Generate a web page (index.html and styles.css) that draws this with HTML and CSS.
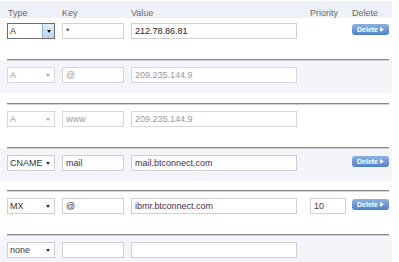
FILE: index.html
```html
<!DOCTYPE html>
<html>
<head>
<meta charset="utf-8">
<link rel="stylesheet" href="styles.css">
</head>
<body>
<div class="dns">
  <div class="head">
    <span class="c-sel">Type</span>
    <span class="c-key">Key</span>
    <span class="c-val">Value</span>
    <span class="c-pri">Priority</span>
    <span class="c-del">Delete</span>
  </div>

  <div class="band first">
    <span class="c-sel sel focus"><span class="sel-t">A</span><span class="arr"><i class="tri"></i></span></span>
    <span class="c-key fld dark">*</span>
    <span class="c-val fld dark">212.78.86.81</span>
    <span class="c-pri"></span>
    <span class="c-del btn">Delete<svg class="bt" width="4" height="5" viewBox="0 0 4 5"><path d="M0 0L4 2.5L0 5Z" fill="#fff"/></svg></span>
  </div>

  <div class="rule"></div>
  <div class="band alt disabled">
    <span class="c-sel sel"><span class="sel-t">A</span><span class="arr"><i class="tri"></i></span></span>
    <span class="c-key fld">@</span>
    <span class="c-val fld">209.235.144.9</span>
  </div>
  <div class="gap"></div>

  <div class="rule"></div>
  <div class="band disabled">
    <span class="c-sel sel"><span class="sel-t">A</span><span class="arr"><i class="tri"></i></span></span>
    <span class="c-key fld">www</span>
    <span class="c-val fld">209.235.144.9</span>
  </div>
  <div class="gap"></div>

  <div class="rule"></div>
  <div class="band alt">
    <span class="c-sel sel"><span class="sel-t">CNAME</span><span class="arr"><i class="tri"></i></span></span>
    <span class="c-key fld">mail</span>
    <span class="c-val fld">mail.btconnect.com</span>
    <span class="c-pri"></span>
    <span class="c-del btn">Delete<svg class="bt" width="4" height="5" viewBox="0 0 4 5"><path d="M0 0L4 2.5L0 5Z" fill="#fff"/></svg></span>
  </div>
  <div class="gap short"></div>

  <div class="rule"></div>
  <div class="band">
    <span class="c-sel sel"><span class="sel-t">MX</span><span class="arr"><i class="tri"></i></span></span>
    <span class="c-key fld">@</span>
    <span class="c-val fld">ibmr.btconnect.com</span>
    <span class="c-pri fld">10</span>
    <span class="c-del btn">Delete<svg class="bt" width="4" height="5" viewBox="0 0 4 5"><path d="M0 0L4 2.5L0 5Z" fill="#fff"/></svg></span>
  </div>
  <div class="gap"></div>

  <div class="rule"></div>
  <div class="band alt last">
    <span class="c-sel sel"><span class="sel-t">none</span><span class="arr"><i class="tri"></i></span></span>
    <span class="c-key fld"></span>
    <span class="c-val fld"></span>
  </div>
</div>
</body>
</html>
```

FILE: styles.css
```css
html, body {
  margin: 0;
  padding: 0;
  background: #fff;
}
body {
  font-family: "Liberation Sans", Arial, sans-serif;
  font-size: 9px;
  color: #333;
}
.dns {
  width: 392px;
  padding-top: 1px;
}
.head {
  display: flex;
  align-items: flex-start;
  height: 10px;
  line-height: 10px;
  padding: 7px 0 0 7px;
  background: #eef1f8;
  color: #6a6a6a;
  font-size: 9px;
}
.head .c-sel { padding-left: 1px; }

.c-sel { width: 48px; flex: none; box-sizing: border-box; }
.c-key { width: 62px; margin-left: 7px; flex: none; box-sizing: border-box; }
.c-val { width: 166px; margin-left: 7px; flex: none; box-sizing: border-box; }
.c-pri { width: 36px; margin-left: 13px; flex: none; box-sizing: border-box; }
.c-del { width: 37px; margin-left: 6px; flex: none; box-sizing: border-box; }

.band {
  display: flex;
  align-items: flex-start;
  box-sizing: border-box;
  height: 32px;
  padding: 6px 0 0 7px;
}
.band.first {
  height: 41px;
  padding-top: 5px;
}
.band.alt { background: #f3f5fa; }
.band.last { height: 28px; }
.gap { height: 10px; }
.gap.short { height: 9px; }

.rule {
  margin: 0 3px 0 7px;
  height: 1px;
  background: #858585;
  border-bottom: 1px solid #d2d2d2;
}

.fld {
  height: 16px;
  border: 1px solid #cfcfcf;
  background: #fff;
  padding-left: 3px;
  line-height: 14px;
  font-size: 9px;
  color: #4d2a4b;
  white-space: nowrap;
  overflow: hidden;
}
.fld.dark { color: #222; }

.sel {
  height: 16px;
  border: 1px solid #cfcfcf;
  background: #fff;
  display: flex;
  align-items: stretch;
  font-size: 9px;
  color: #333;
}
.sel-t {
  flex: 1;
  padding-left: 2px;
  line-height: 14px;
}
.arr {
  width: 11px;
  display: flex;
  align-items: center;
  justify-content: center;
  margin-right: 1px;
}
.tri {
  width: 0;
  height: 0;
  border-left: 2.5px solid transparent;
  border-right: 2.5px solid transparent;
  border-top: 3px solid #333;
}
.sel.focus {
  border-color: #6d6d6d;
}
.sel.focus .arr {
  margin-right: 0;
  background: linear-gradient(#e2edf9, #bcd4ef);
  border-left: 1px solid #8fb0d8;
}
.sel.focus .tri { border-top-color: #111; }

.disabled .sel,
.disabled .fld {
  border-color: #d8d8d8;
  color: #9a9a9a;
}
.disabled .tri { border-top-color: #a8a8a8; }

.btn {
  margin-top: 1px;
  height: 11px;
  border-radius: 3px;
  background: linear-gradient(#8db2e4, #4f80c6);
  color: #fff;
  font-weight: bold;
  font-size: 7px;
  line-height: 11px;
  display: flex;
  align-items: center;
  justify-content: center;
  gap: 2px;
}
.bt { display: block; }
```
